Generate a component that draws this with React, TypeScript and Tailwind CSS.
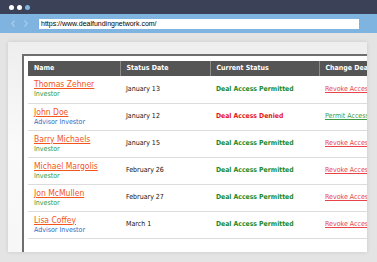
import React from "react";

type Row = {
  name: string;
  role: string;
  advisor: boolean;
  date: string;
  permitted: boolean;
};

const rows: Row[] = [
  { name: "Thomas Zehner", role: "Investor", advisor: false, date: "January 13", permitted: true },
  { name: "John Doe", role: "Advisor Investor", advisor: true, date: "January 12", permitted: false },
  { name: "Barry Michaels", role: "Investor", advisor: false, date: "January 15", permitted: true },
  { name: "Michael Margolis", role: "Investor", advisor: false, date: "February 26", permitted: true },
  { name: "Jon McMullen", role: "Investor", advisor: false, date: "February 27", permitted: true },
  { name: "Lisa Coffey", role: "Advisor Investor", advisor: true, date: "March 1", permitted: true },
];

export default function App() {
  return (
    <div
      className="w-[377px] h-[262px] overflow-hidden bg-[#e4e4e4] flex flex-col"
      style={{ fontFamily: '"DejaVu Sans Condensed", "DejaVu Sans", Tahoma, sans-serif' }}
    >
      {/* window title bar */}
      <div className="h-[14px] bg-[#3b4257] flex items-center pl-[9px] gap-[3px] shrink-0">
        <span className="w-[5px] h-[5px] rounded-full bg-white" />
        <span className="w-[5px] h-[5px] rounded-full bg-white" />
        <span className="w-[5px] h-[5px] rounded-full bg-[#7fb3e0]" />
      </div>
      {/* address bar */}
      <div className="h-[19px] bg-[#7fb3e0] flex items-center shrink-0">
        <div className="w-[39px] flex items-center pl-[11px] gap-[9px]">
          <svg width="4" height="7" viewBox="0 0 4 7">
            <path d="M3.5 0.5 L0.8 3.5 L3.5 6.5" fill="none" stroke="#a9cdee" strokeWidth="1.2" />
          </svg>
          <svg width="4" height="7" viewBox="0 0 4 7">
            <path d="M0.5 0.5 L3.2 3.5 L0.5 6.5" fill="none" stroke="#a9cdee" strokeWidth="1.2" />
          </svg>
        </div>
        <div className="w-[320px] h-[10px] bg-white flex items-center pl-[2px] text-[7px] leading-none text-black"
          style={{ fontFamily: '"Liberation Sans", Arial, sans-serif' }}>
          https://www.dealfundingnetwork.com/
        </div>
      </div>
      {/* body */}
      <div className="flex-1 pt-[9px] pl-[8px]">
        <div className="w-[359px] h-[210px] overflow-hidden bg-gradient-to-b from-[#eeeeee] via-[#fafafa] to-[#f7f7f7] shadow-[0_0_4px_rgba(0,0,0,0.12)] pt-[12px] pl-[14px]">
          <div className="h-[250px] w-[420px] border-l-2 border-t-2 border-[#6e6e6e] bg-white pl-[4px] pt-[5px]">
            <table className="border-collapse text-left" style={{ width: 430 }}>
              <thead>
                <tr className="h-[15px] bg-[#555555] text-white text-[7px] font-bold">
                  <th className="w-[92px] pl-[6px] font-bold">Name</th>
                  <th className="w-[90px] pl-[6px] font-bold border-l border-[#8a8a8a]">Status Date</th>
                  <th className="w-[109px] pl-[6px] font-bold border-l border-[#8a8a8a]">Current Status</th>
                  <th className="pl-[6px] font-bold border-l border-[#8a8a8a]">Change Deal Access</th>
                </tr>
              </thead>
              <tbody>
                {rows.map((r) => (
                  <tr key={r.name} className="h-[27px] border-b border-[#dcdcdc]">
                    <td className="pl-[6px] align-middle">
                      <div className="text-[8.5px] leading-[11px] text-[#f2551c] underline font-normal">{r.name}</div>
                      <div className={`text-[7px] leading-[9px] ${r.advisor ? "text-[#2a6cc4]" : "text-[#2f9a3a]"}`}>{r.role}</div>
                    </td>
                    <td className="pl-[6px] text-[7px] text-[#111] align-middle">{r.date}</td>
                    <td className={`pl-[6px] text-[6.8px] font-bold align-middle ${r.permitted ? "text-[#1b8a2a]" : "text-[#e5141b]"}`}>
                      {r.permitted ? "Deal Access Permitted" : "Deal Access Denied"}
                    </td>
                    <td className="pl-[6px] text-[7px] align-middle">
                      {r.permitted ? (
                        <span className="underline text-[#e8434a]">Revoke Access</span>
                      ) : (
                        <span className="underline text-[#3a9a45]">Permit Access</span>
                      )}
                    </td>
                  </tr>
                ))}
              </tbody>
            </table>
          </div>
        </div>
      </div>
    </div>
  );
}
